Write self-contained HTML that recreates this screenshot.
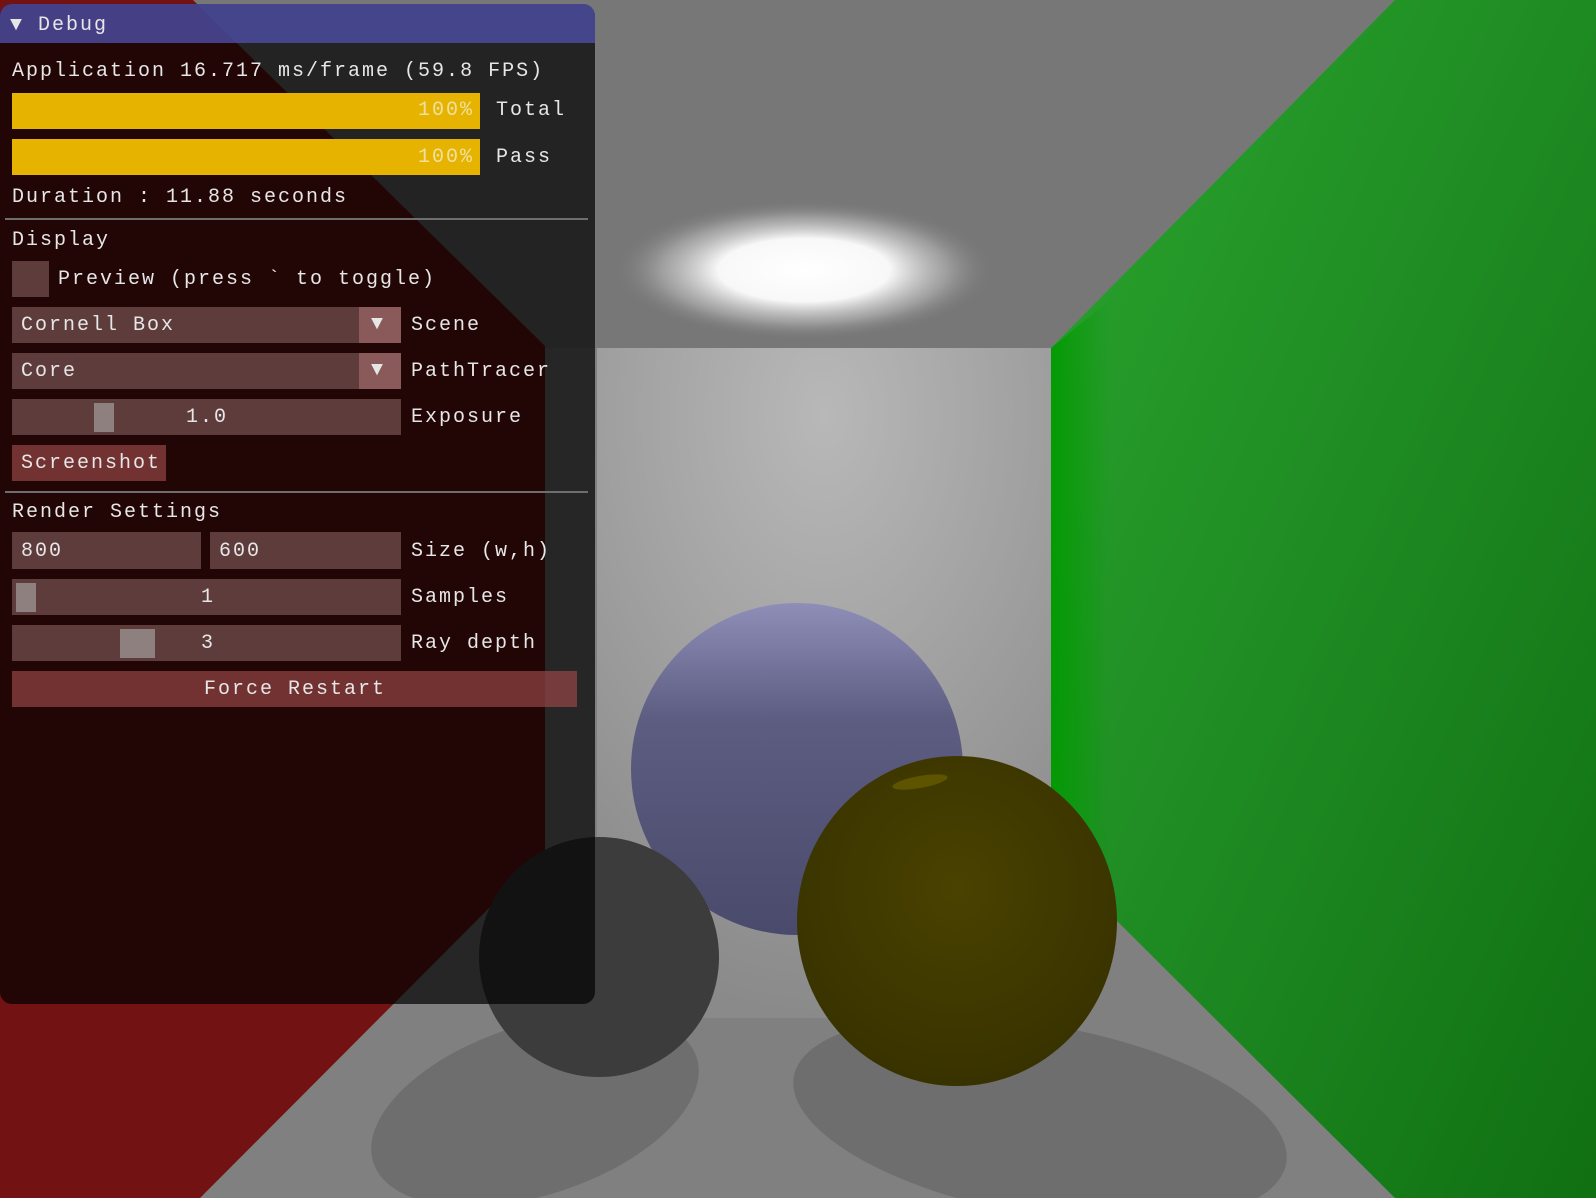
<!DOCTYPE html>
<html><head><meta charset="utf-8"><style>
html,body{margin:0;padding:0;background:#222;}
#root{position:relative;width:1596px;height:1198px;overflow:hidden;background:#808080;}
svg.scene{position:absolute;left:0;top:0;}
.panel{position:absolute;left:0;top:4px;width:595px;height:1000px;background:rgba(0,0,0,0.7);border-radius:12px;}
.title{position:absolute;left:0;top:4px;width:595px;height:39px;background:rgba(80,80,170,0.78);border-radius:12px 12px 0 0;}
.t{position:absolute;font-family:"Liberation Mono","DejaVu Sans Mono",monospace;font-size:20px;letter-spacing:2px;color:#e6e6e6;white-space:pre;line-height:24px;}
.f{position:absolute;background:rgba(130,95,95,0.62);}
.bar{position:absolute;background:#e6b400;}
.btn{position:absolute;background:rgba(150,70,70,0.7);}
.arr{position:absolute;background:#8a5a5a;}
.grab{position:absolute;background:#8f8080;}
.sep{position:absolute;left:5px;width:583px;height:2px;background:#6e6e6e;}
</style></head><body><div id="root">
<svg class="scene" width="1596" height="1198" viewBox="0 0 1596 1198">
<defs>
<radialGradient id="light" cx="0.5" cy="0.5" r="0.5">
<stop offset="0" stop-color="#fff"/><stop offset="0.45" stop-color="#f8f8f8"/><stop offset="0.75" stop-color="#b0b0b0" stop-opacity="0.7"/><stop offset="1" stop-color="#7a7a7a" stop-opacity="0"/></radialGradient>
<radialGradient id="back" cx="0.5" cy="0.1" r="0.9">
<stop offset="0" stop-color="#b8b8b8"/><stop offset="1" stop-color="#8a8a8a"/></radialGradient>
<linearGradient id="green" x1="0" y1="0" x2="1" y2="1">
<stop offset="0" stop-color="#2aa52e"/><stop offset="0.5" stop-color="#1e8a22"/><stop offset="1" stop-color="#107012"/></linearGradient>
<linearGradient id="gedge" x1="0" y1="0" x2="1" y2="0">
<stop offset="0" stop-color="#009a00" stop-opacity="0.9"/><stop offset="1" stop-color="#009a00" stop-opacity="0"/></linearGradient>
<linearGradient id="blue" x1="0" y1="0" x2="0" y2="1">
<stop offset="0" stop-color="#8e8eb8"/><stop offset="0.35" stop-color="#5d5d82"/><stop offset="1" stop-color="#4a4a6c"/></linearGradient>
<radialGradient id="yel" cx="0.5" cy="0.4" r="0.6">
<stop offset="0" stop-color="#4a4200"/><stop offset="1" stop-color="#383200"/></radialGradient>
</defs>
<rect width="1596" height="1198" fill="#808080"/>
<rect x="0" y="0" width="1596" height="348" fill="#777"/>
<ellipse cx="804" cy="270" rx="190" ry="70" fill="url(#light)"/>
<rect x="597" y="348" width="454" height="670" fill="url(#back)"/>
<polygon points="597,1018 1051,1018 1117,921 1395,1198 199,1198" fill="#808080"/>
<polygon points="1051,348 1395,0 1596,0 1596,1198 1395,1198 1117,921 1051,921" fill="url(#green)"/>
<polygon points="1051,348 1110,300 1110,975 1051,921" fill="url(#gedge)"/>
<polygon points="0,0 193,0 545,346 545,852 200,1198 0,1198" fill="#721212"/>
<ellipse cx="535" cy="1110" rx="170" ry="85" fill="#6e6e6e" transform="rotate(-18 535 1110)"/>
<ellipse cx="1040" cy="1120" rx="250" ry="95" fill="#6e6e6e" transform="rotate(10 1040 1120)"/>
<ellipse cx="797" cy="769" rx="166" ry="166" fill="url(#blue)"/>
<ellipse cx="599" cy="957" rx="120" ry="120" fill="#3c3c3c"/>
<ellipse cx="957" cy="921" rx="160" ry="165" fill="url(#yel)"/>
<ellipse cx="920" cy="782" rx="28" ry="6" fill="#5e5400" transform="rotate(-10 920 782)"/>
</svg>
<div class="panel"></div>
<div class="title"></div>
<div class="t" style="left:10px;top:6px;font-size:20px;line-height:39px;">&#9660;</div>
<div class="t" style="left:38px;top:14px;">Debug</div>
<div class="t" style="left:12px;top:60px;">Application 16.717 ms/frame (59.8 FPS)</div>
<div class="bar" style="left:12px;top:93px;width:468px;height:36px;"></div>
<div class="t" style="left:418px;top:99px;color:#f0e0a0;">100%</div>
<div class="t" style="left:496px;top:99px;">Total</div>
<div class="bar" style="left:12px;top:139px;width:468px;height:36px;"></div>
<div class="t" style="left:418px;top:146px;color:#f0e0a0;">100%</div>
<div class="t" style="left:496px;top:146px;">Pass</div>
<div class="t" style="left:12px;top:186px;">Duration : 11.88 seconds</div>
<div class="sep" style="top:218px;"></div>
<div class="t" style="left:12px;top:229px;">Display</div>
<div class="f" style="left:12px;top:261px;width:37px;height:36px;"></div>
<div class="t" style="left:58px;top:268px;">Preview (press ` to toggle)</div>
<div class="f" style="left:12px;top:307px;width:389px;height:36px;"></div>
<div class="arr" style="left:359px;top:307px;width:42px;height:36px;"></div>
<div class="t" style="left:371px;top:313px;">&#9660;</div>
<div class="t" style="left:21px;top:314px;">Cornell Box</div>
<div class="t" style="left:411px;top:314px;">Scene</div>
<div class="f" style="left:12px;top:353px;width:389px;height:36px;"></div>
<div class="arr" style="left:359px;top:353px;width:42px;height:36px;"></div>
<div class="t" style="left:371px;top:359px;">&#9660;</div>
<div class="t" style="left:21px;top:360px;">Core</div>
<div class="t" style="left:411px;top:360px;">PathTracer</div>
<div class="f" style="left:12px;top:399px;width:389px;height:36px;"></div>
<div class="grab" style="left:94px;top:403px;width:20px;height:29px;"></div>
<div class="t" style="left:186px;top:406px;">1.0</div>
<div class="t" style="left:411px;top:406px;">Exposure</div>
<div class="btn" style="left:12px;top:445px;width:154px;height:36px;"></div>
<div class="t" style="left:21px;top:452px;">Screenshot</div>
<div class="sep" style="top:491px;"></div>
<div class="t" style="left:12px;top:501px;">Render Settings</div>
<div class="f" style="left:12px;top:532px;width:189px;height:37px;"></div>
<div class="f" style="left:210px;top:532px;width:191px;height:37px;"></div>
<div class="t" style="left:21px;top:540px;">800</div>
<div class="t" style="left:219px;top:540px;">600</div>
<div class="t" style="left:411px;top:540px;">Size (w,h)</div>
<div class="f" style="left:12px;top:579px;width:389px;height:36px;"></div>
<div class="grab" style="left:16px;top:583px;width:20px;height:29px;"></div>
<div class="t" style="left:201px;top:586px;">1</div>
<div class="t" style="left:411px;top:586px;">Samples</div>
<div class="f" style="left:12px;top:625px;width:389px;height:36px;"></div>
<div class="grab" style="left:120px;top:629px;width:35px;height:29px;"></div>
<div class="t" style="left:201px;top:632px;">3</div>
<div class="t" style="left:411px;top:632px;">Ray depth</div>
<div class="btn" style="left:12px;top:671px;width:565px;height:36px;"></div>
<div class="t" style="left:204px;top:678px;">Force Restart</div>
</div></body></html>
